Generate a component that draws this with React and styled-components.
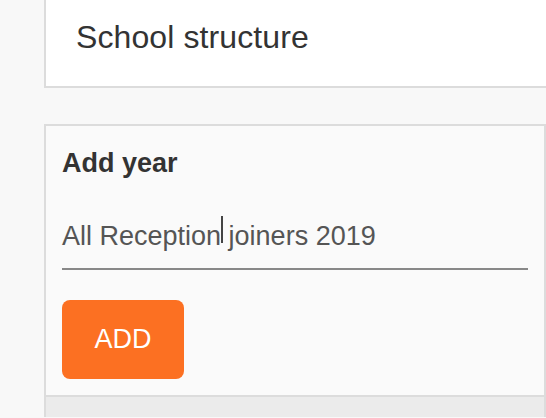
import React from 'react'
import styled, { createGlobalStyle } from 'styled-components'

const GlobalStyle = createGlobalStyle`
  html, body {
    margin: 0;
    padding: 0;
    background: #f8f8f8;
    overflow: hidden;
  }
  body {
    font-family: 'Liberation Sans', Arial, Helvetica, sans-serif;
    color: #333;
  }
`

const Page = styled.div`
  padding-left: 44px;
`

const HeaderCard = styled.div`
  box-sizing: border-box;
  height: 88px;
  margin-right: -20px;
  padding: 17px 30px 0;
  background: #fff;
  border-left: 2px solid #dcdcdc;
  border-bottom: 2px solid #dcdcdc;
`

const Title = styled.h1`
  margin: 0;
  font-size: 32px;
  line-height: 40px;
  font-weight: 400;
  color: #333;
  letter-spacing: 0.1px;
`

const Card = styled.div`
  margin-top: 36px;
  background: #fafafa;
  border: 2px solid #dcdcdc;
  border-bottom: none;
`

const CardBody = styled.div`
  padding: 21px 16px 16px;
`

const Label = styled.h2`
  margin: 0;
  font-size: 27px;
  line-height: 32px;
  font-weight: 700;
  color: #333;
`

const Field = styled.div`
  margin-top: 41px;
  padding-bottom: 16px;
  border-bottom: 2px solid #888;
  font-size: 27px;
  line-height: 32px;
  color: #555;
  white-space: pre;
`

const Caret = styled.span`
  display: inline-block;
  width: 0;
  height: 27px;
  margin: -6px -2px 0 0;
  border-left: 2px solid #444;
  vertical-align: 2px;
`

const AddButton = styled.button`
  display: block;
  margin-top: 30px;
  width: 122px;
  height: 79px;
  padding: 0;
  border: none;
  border-radius: 8px;
  background: #fc7022;
  color: #fff;
  font-family: 'Liberation Sans', Arial, Helvetica, sans-serif;
  font-size: 27px;
  cursor: pointer;
`

const CardFooter = styled.div`
  height: 20px;
  background: #ebebeb;
  border-top: 2px solid #dcdcdc;
`

export default function App() {
  return (
    <>
      <GlobalStyle />
      <Page>
        <HeaderCard>
          <Title>School structure</Title>
        </HeaderCard>
        <Card>
          <CardBody>
            <Label>Add year</Label>
            <Field>
              All Reception<Caret /> joiners 2019
            </Field>
            <AddButton>ADD</AddButton>
          </CardBody>
          <CardFooter />
        </Card>
      </Page>
    </>
  )
}
